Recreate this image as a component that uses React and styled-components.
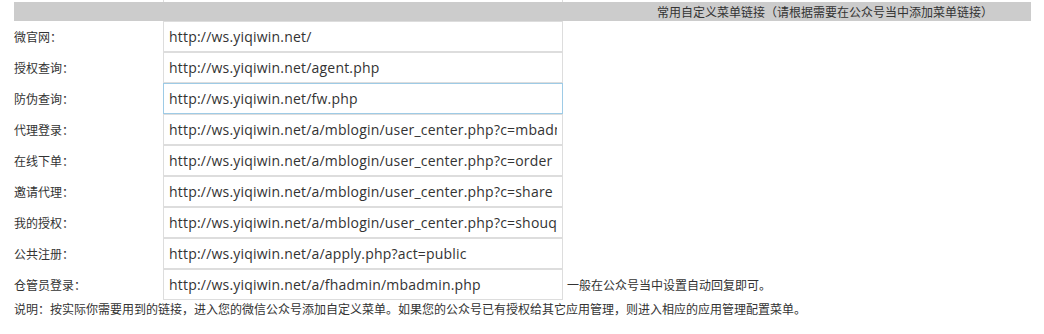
import React from "react";
import styled, { createGlobalStyle } from "styled-components";

const links = [
  { label: "微官网：", url: "http://ws.yiqiwin.net/" },
  { label: "授权查询：", url: "http://ws.yiqiwin.net/agent.php" },
  { label: "防伪查询：", url: "http://ws.yiqiwin.net/fw.php", focused: true },
  { label: "代理登录：", url: "http://ws.yiqiwin.net/a/mblogin/user_center.php?c=mbadmin" },
  { label: "在线下单：", url: "http://ws.yiqiwin.net/a/mblogin/user_center.php?c=order" },
  { label: "邀请代理：", url: "http://ws.yiqiwin.net/a/mblogin/user_center.php?c=share" },
  { label: "我的授权：", url: "http://ws.yiqiwin.net/a/mblogin/user_center.php?c=shouquan" },
  { label: "公共注册：", url: "http://ws.yiqiwin.net/a/apply.php?act=public" },
  {
    label: "仓管员登录：",
    url: "http://ws.yiqiwin.net/a/fhadmin/mbadmin.php",
    note: "一般在公众号当中设置自动回复即可。",
  },
];

const App = () => {
  return (
    <>
      <GlobalStyle />
      <Page>
        {/* tail of the previous block, cut off at the top */}
        <Grid>
          <span />
          <Sliver />
          <span />
        </Grid>
        <HeaderBar>常用自定义菜单链接（请根据需要在公众号当中添加菜单链接）</HeaderBar>
        <Grid>
          {links.map((item) => (
            <React.Fragment key={item.label}>
              <Label>{item.label}</Label>
              <UrlInput readOnly defaultValue={item.url} $focused={item.focused} />
              <Note>{item.note}</Note>
            </React.Fragment>
          ))}
        </Grid>
        <Explain>
          说明：按实际你需要用到的链接，进入您的微信公众号添加自定义菜单。如果您的公众号已有授权给其它应用管理，则进入相应的应用管理配置菜单。
        </Explain>
      </Page>
    </>
  );
};

export default App;

const GlobalStyle = createGlobalStyle`
  body {
    margin: 0;
    background: #fff;
    font-family: "Noto Sans CJK SC", "Noto Sans", sans-serif;
    color: #333;
    text-spacing-trim: space-all;
  }
`;

const Page = styled.div`
  padding: 0 13px 0 14px;
  width: 1044px;
  box-sizing: border-box;
`;

const Grid = styled.div`
  display: grid;
  grid-template-columns: 149px 400px 1fr;
`;

const Sliver = styled.div`
  height: 2px;
  border-left: 1px solid #ddd;
  border-right: 1px solid #ddd;
`;

const HeaderBar = styled.div`
  height: 19px;
  line-height: 19px;
  background: #ccc;
  text-align: right;
  padding-right: 38px;
  font-size: 12px;
  color: #333;
`;

const Label = styled.div`
  height: 31px;
  display: flex;
  align-items: center;
  padding-bottom: 1px;
  box-sizing: border-box;
  font-size: 12px;
  color: #333;
`;

const UrlInput = styled.input`
  box-sizing: border-box;
  width: 400px;
  height: 31px;
  margin: 0;
  padding: 0 5px;
  border: 1px solid ${(p) => (p.$focused ? "#9ecbe6" : "#ddd")};
  outline: none;
  font-family: "Open Sans", "Noto Sans", sans-serif;
  font-size: 14px;
  letter-spacing: 0.2px;
  color: #333;
  background: #fff;
`;

const Note = styled.div`
  display: flex;
  align-items: center;
  padding-left: 4px;
  font-size: 12px;
  color: #333;
`;

const Explain = styled.div`
  margin-top: 1px;
  font-size: 12px;
  line-height: 16px;
  color: #333;
`;
